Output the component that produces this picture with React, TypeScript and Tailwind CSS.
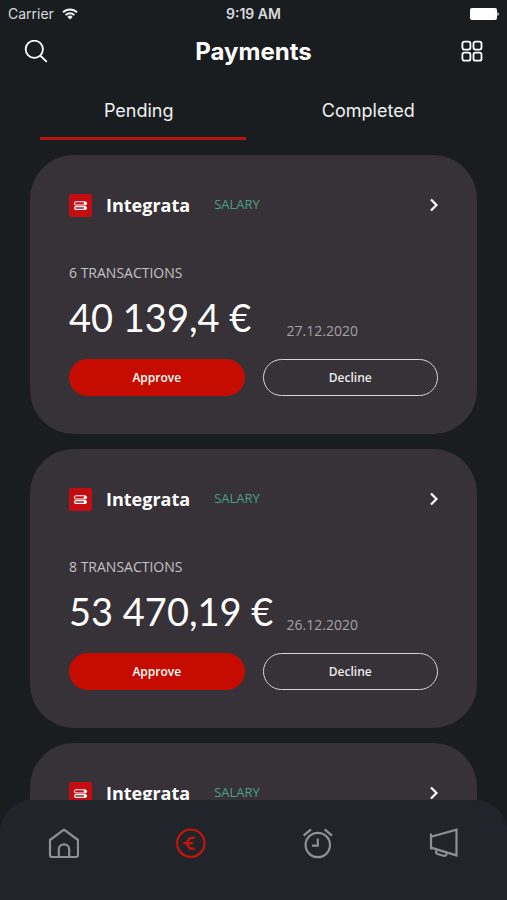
import React, { useState } from 'react';

type Payment = {
    id: number;
    company: string;
    category: string;
    transactions: number;
    amount: string;
    date: string;
};

const payments: Payment[] = [
    { id: 1, company: 'Integrata', category: 'SALARY', transactions: 6, amount: '40 139,4 €', date: '27.12.2020' },
    { id: 2, company: 'Integrata', category: 'SALARY', transactions: 8, amount: '53 470,19 €', date: '26.12.2020' },
    { id: 3, company: 'Integrata', category: 'SALARY', transactions: 5, amount: '12 840,5 €', date: '25.12.2020' },
];

const StatusBar = () => (
    <div className="grid h-7 shrink-0 grid-cols-3 items-center px-2 font-[Inter,sans-serif] text-sm text-[#d9dbdc]">
        <div className="flex items-center gap-2">
            <span>Carrier</span>
            <svg width="16" height="12" viewBox="0 0 16 12" fill="none" stroke="#f2f3f3" strokeWidth="2">
                <path d="M1 4.4a10 10 0 0 1 14 0" />
                <path d="M3.6 7.1a6.3 6.3 0 0 1 8.8 0" />
                <path d="M8 11.5 5.4 8.9a3.7 3.7 0 0 1 5.2 0z" fill="#f2f3f3" stroke="none" />
            </svg>
        </div>
        <span className="text-center font-semibold">9:19 AM</span>
        <svg className="justify-self-end" width="30" height="12" viewBox="0 0 30 12" fill="#ffffff">
            <rect x="1" width="27" height="12" rx="2" />
            <path d="M28.5 4a2.2 2.2 0 0 1 0 4z" />
        </svg>
    </div>
);

const Header = () => (
    <header className="flex h-12 shrink-0 items-center justify-between px-6 font-[Inter,sans-serif] text-white">
        <button type="button" aria-label="Search">
            <svg width="24" height="24" viewBox="0 0 24 24" fill="none" stroke="currentColor" strokeWidth="1.8">
                <circle cx="10.3" cy="9.3" r="8.6" />
                <path d="m16.2 15.5 6.6 6.4" />
            </svg>
        </button>
        <h1 className="text-2xl font-bold">Payments</h1>
        <button type="button" aria-label="Categories">
            <svg width="24" height="24" viewBox="0 0 24 24" fill="none" stroke="currentColor" strokeWidth="1.8">
                <rect x="3.4" y="1.6" width="8" height="8" rx="2" />
                <rect x="14.5" y="1.6" width="8" height="8" rx="2" />
                <rect x="3.4" y="12.7" width="8" height="8" rx="2" />
                <rect x="14.5" y="12.7" width="8" height="8" rx="2" />
            </svg>
        </button>
    </header>
);

const PaymentCard = ({ payment }: { payment: Payment }) => (
    <article className="rounded-[44px] bg-[#363237] px-[39px] pt-9 pb-[38px]">
        <div className="flex h-7 items-center">
            <svg width="23" height="23" viewBox="0 0 23 23" fill="none" stroke="#ffffff" strokeWidth="1.1">
                <rect width="23" height="23" rx="2" fill="#c40d13" stroke="none" />
                <path d="M16.5 7.8H7a1.6 1.6 0 0 0 0 3.2h9.5" />
                <path d="M16.5 12.6H7a1.4 1.4 0 0 0 0 2.8h9.5" />
                <circle cx="16.4" cy="9.4" r="1.7" fill="#ffffff" stroke="none" />
                <circle cx="16.4" cy="14" r="1.7" fill="#ffffff" stroke="none" />
            </svg>
            <h2 className="ml-[14px] text-lg font-bold text-white">{payment.company}</h2>
            <span className="ml-6 text-[13px] text-[#4aa183]">{payment.category}</span>
            <button type="button" aria-label="Open payment" className="ml-auto">
                <svg width="8" height="14" viewBox="0 0 8 14" fill="none" stroke="#ffffff" strokeWidth="2.2">
                    <path d="m1 1.5 5.5 5.5L1 12.5" />
                </svg>
            </button>
        </div>
        <p className="mt-11 text-sm text-[#c3c1c4]">{payment.transactions} TRANSACTIONS</p>
        <div className="mt-[10px] grid h-12 grid-cols-2 items-end gap-[18px]">
            <p className="font-[Lato,sans-serif] text-[38px] leading-12 whitespace-nowrap text-white">{payment.amount}</p>
            <time className="pl-6 text-sm text-[#a5a2a7]">{payment.date}</time>
        </div>
        <div className="mt-[18px] grid grid-cols-2 gap-[18px] text-xs font-semibold">
            <button type="button" className="h-[37px] rounded-full bg-[#c60c00] text-white">Approve</button>
            <button type="button" className="h-[37px] rounded-full border border-[#d5d3d6] text-[#eceaed]">Decline</button>
        </div>
    </article>
);

const BottomNav = () => (
    <nav className="grid h-[100px] shrink-0 grid-cols-4 items-start rounded-t-[32px] bg-[#21242b] pt-[27px] text-[#8e9094]">
        <a href="#home" aria-label="Home" className="justify-self-center">
            <svg width="32" height="32" viewBox="0 0 32 32" fill="none" stroke="currentColor" strokeWidth="2.2" strokeLinejoin="round">
                <path d="M3 13 17 2.7 31 13V28a2 2 0 0 1-2 2H5a2 2 0 0 1-2-2z" />
                <path d="M11.8 30v-7.500a5.200 5.200 0 0 1 10.400 0V30" />
            </svg>
        </a>
        <a href="#payments" aria-label="Payments" aria-current="page" className="justify-self-center text-[#c41509]">
            <svg width="32" height="32" viewBox="0 0 32 32" fill="none" stroke="currentColor" strokeWidth="2.2">
                <circle cx="16.8" cy="16.2" r="13.7" />
                <path d="M20.8 11c-4.200-1-7.600 1.200-7.600 5.200s3.200 6.300 7.600 5.200" strokeWidth="2.4" />
                <path d="M9.500 16.200h9.500" strokeWidth="2.4" />
            </svg>
        </a>
        <a href="#reminders" aria-label="Reminders" className="justify-self-center">
            <svg width="32" height="32" viewBox="0 0 32 32" fill="none" stroke="currentColor" strokeWidth="2.2">
                <circle cx="16.8" cy="18" r="12.2" />
                <path d="M16.800 11.500v7.200h-5.800M2.600 8.700l7.400-6.300M31 8.700l-7.400-6.300" />
            </svg>
        </a>
        <a href="#news" aria-label="News" className="justify-self-center">
            <svg width="32" height="32" viewBox="0 0 32 32" fill="none" stroke="currentColor" strokeWidth="2.2">
                <path d="M3 6.500v16" />
                <path d="M3 9.700 28.500 2.600v25.800L3 20.600" />
                <path d="m8.700 22.500-.5 2.200c-.3 1.200.3 2 1.400 2.300l6 1.700c1.500.4 2.600-.2 3-1.500l.7-1.800" />
            </svg>
        </a>
    </nav>
);

const App = () => {
    const [tab, setTab] = useState('Pending');

    return (
        <div className="flex h-screen flex-col overflow-hidden bg-[#1a1d20] font-['Open_Sans',sans-serif]">
            <StatusBar />
            <Header />
            <div role="tablist" className="mt-3 grid shrink-0 grid-cols-2 px-6 font-[Inter,sans-serif] text-lg text-[#f0f1f1]">
                {['Pending', 'Completed'].map((name) => (
                    <button key={name} type="button" role="tab" aria-selected={tab === name} onClick={() => setTab(name)}>
                        <span className="block pt-[9px] pb-3">{name}</span>
                        <span className={tab === name ? 'mr-2 ml-4 block h-[3px] bg-[#b5140f]' : 'block h-[3px]'} />
                    </button>
                ))}
            </div>
            <main className="mt-[15px] flex min-h-0 flex-1 flex-col gap-[15px] overflow-y-auto px-[30px] [scrollbar-width:none]">
                {payments.map((payment) => (
                    <PaymentCard key={payment.id} payment={payment} />
                ))}
            </main>
            <BottomNav />
        </div>
    );
};

export default App;
